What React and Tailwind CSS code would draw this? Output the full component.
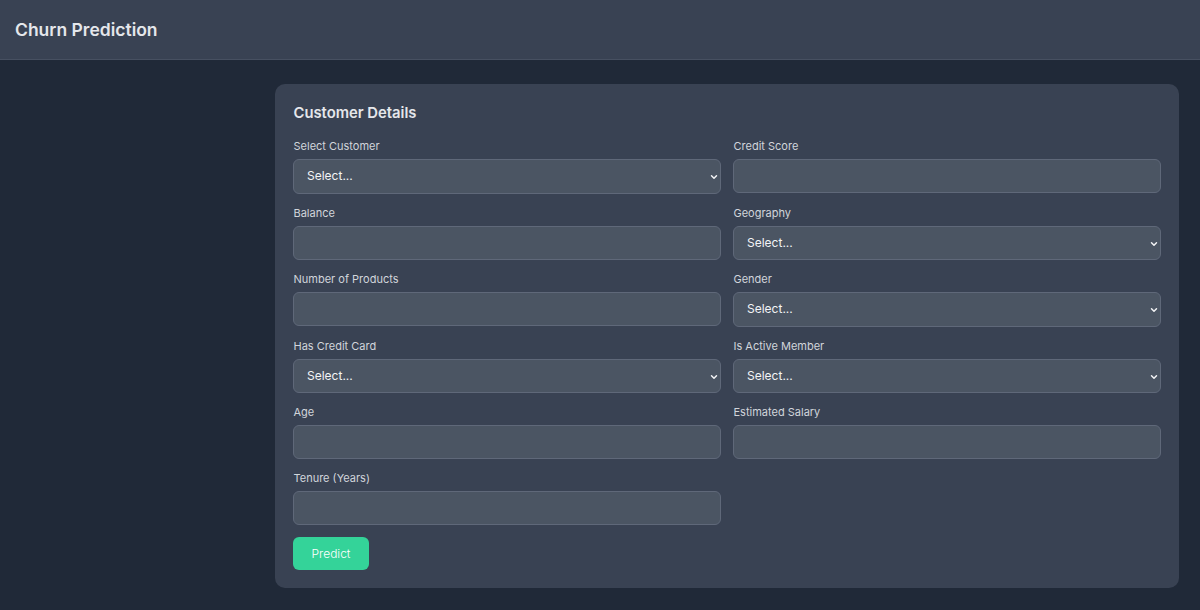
import { ChevronDown } from "lucide-react";

const fields = [
  { label: "Select Customer", type: "select" },
  { label: "Credit Score", type: "input" },
  { label: "Balance", type: "input" },
  { label: "Geography", type: "select" },
  { label: "Number of Products", type: "input" },
  { label: "Gender", type: "select" },
  { label: "Has Credit Card", type: "select" },
  { label: "Is Active Member", type: "select" },
  { label: "Age", type: "input" },
  { label: "Estimated Salary", type: "input" },
  { label: "Tenure (Years)", type: "input" },
];

function Field({ label, type }) {
  return (
    <div className="flex flex-col">
      <label className="mb-[6px] pl-[0.5px] text-[11px] leading-[14px] font-normal text-[#d1d5db]">{label}</label>
      {type === "select" ? (
        <div className="relative">
          <select className="block h-[34.5px] w-full appearance-none rounded-[6px] border border-[#5f6879] bg-[#4b5563] pr-3 pl-[13px] text-[12px] text-[#f3f4f6]">
            <option>Select...</option>
          </select>
          <ChevronDown size={10} strokeWidth={3.5} className="pointer-events-none absolute top-[13px] right-[2px] text-[#f3f4f6]" />
        </div>
      ) : (
        <input className="block h-[34px] w-full rounded-[6px] border border-[#5f6879] bg-[#4b5563] px-3 text-[12px] text-[#f3f4f6]" />
      )}
    </div>
  );
}

export default function App() {
  return (
    <div className="min-h-[610px] bg-[#202938] font-['Inter',sans-serif]">
      <header className="flex h-[60px] items-center border-b border-[#475061] bg-[#394253] px-[15px] pt-[1px]">
        <h1 className="text-[17.5px] font-semibold text-[#e5e7eb]">Churn Prediction</h1>
      </header>
      <main className="flex pt-[24px] pr-[21px] pl-[275px]">
        <section className="flex-1 rounded-[10px] bg-[#394253] px-[18px] pt-[19px] pb-[18px]">
          <h2 className="mb-[16px] pl-[0.5px] text-[14.8px] leading-[20px] font-semibold text-[#e5e7eb]">Customer Details</h2>
          <div className="grid grid-cols-2 gap-x-[12px] gap-y-[12px]">
            {fields.map((f) => (
              <Field key={f.label} label={f.label} type={f.type} />
            ))}
          </div>
          <button className="mt-[12px] h-[33px] w-[76px] rounded-[6px] bg-[#34d399] text-[12px] font-light text-white">Predict</button>
        </section>
      </main>
    </div>
  );
}
